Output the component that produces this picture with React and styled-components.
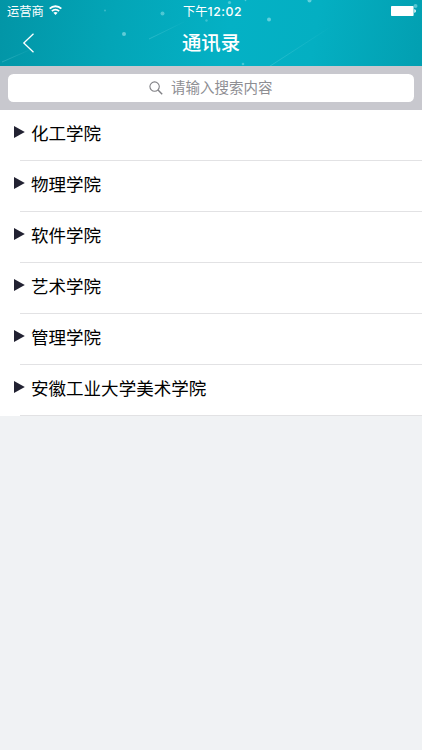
import React from "react";
import styled, { createGlobalStyle } from "styled-components";

const GlobalStyle = createGlobalStyle`
  * { box-sizing: border-box; }
  html, body { margin: 0; padding: 0; }
  body {
    background: #f0f2f4;
    font-family: "Noto Sans CJK SC", sans-serif;
  }
`;

const Screen = styled.div`
  min-height: 750px;
  background: #f0f2f4;
`;

const Header = styled.header`
  position: relative;
  height: 66px;
  overflow: hidden;
  color: #fff;
  background: linear-gradient(100deg, #0295a6 0%, #03a5b7 27%, #04b1c5 54%, #04afc2 74%, #029fb1 100%);
`;

const Sky = styled.svg`
  position: absolute;
  inset: 0;
`;

const StatusBar = styled.div`
  position: relative;
  display: grid;
  grid-template-columns: 1fr auto 1fr;
  align-items: center;
  height: 22px;
  padding: 0 6px 0 7px;
  font-size: 12.3px;
  line-height: 22px;
`;

const Carrier = styled.div`
  display: flex;
  align-items: center;
  gap: 5px;
  height: 20px;
  line-height: 20px;
  margin-bottom: 2px;
`;

const WifiGlyph = styled.svg`
  margin-bottom: 2px;
`;

const Clock = styled.div`
  padding-left: 2px;
  font-weight: 400;
  span {
    font-family: Inter, sans-serif;
    font-weight: 500;
    font-size: 12.3px;
    letter-spacing: 0.5px;
  }
`;

const Battery = styled.svg`
  justify-self: end;
  margin-bottom: 1px;
`;

const NavBar = styled.div`
  position: relative;
  display: grid;
  grid-template-columns: 1fr auto 1fr;
  align-items: center;
  height: 44px;
  padding-left: 22px;
`;

const BackButton = styled.button`
  display: flex;
  width: 14px;
  margin-bottom: 2px;
  padding: 0;
  border: 0;
  background: none;
`;

const Title = styled.h1`
  margin: 0 22px 5px 0;
  font-size: 19.4px;
  font-weight: 500;
  line-height: 30px;
`;

const SearchBar = styled.div`
  height: 44px;
  padding: 7.5px 8.5px 8px 8px;
  background: #c8c8ce;
`;

const SearchField = styled.div`
  display: flex;
  align-items: center;
  justify-content: center;
  gap: 8px;
  height: 28.5px;
  padding: 0 0 2px 0;
  border-radius: 5.5px;
  background: #fff;
  color: #8e8e93;
  font-size: 14.5px;
  font-weight: 400;
  line-height: 26px;
`;

const SearchGlyph = styled.svg`
  margin-top: 2px;
`;

const List = styled.ul`
  margin: 0;
  padding: 0;
  list-style: none;
  background: #fff;
`;

const Row = styled.li`
  display: flex;
  align-items: center;
  height: 50.95px;
  padding-left: 14px;
  background: linear-gradient(#e2e2e4, #e2e2e4) 20px 100% / 100% 1px no-repeat;
`;

const Arrow = styled.svg`
  flex: none;
  margin: 0 6px 6.2px 0;
`;

const Name = styled.span`
  padding-bottom: 4.5px;
  color: #000;
  font-size: 17.55px;
  font-weight: 400;
  line-height: 28px;
`;

const colleges = ["化工学院", "物理学院", "软件学院", "艺术学院", "管理学院", "安徽工业大学美术学院"];

const stars = [
  [124, 34, 2, 0.5],
  [105, 10.5, 1, 0.3],
  [162.5, 13.5, 2, 0.4],
  [206.5, 20.5, 1.2, 0.3],
  [229.5, 2.5, 1.6, 0.4],
  [245.5, 0.5, 0.8, 0.4],
  [269, 19.5, 2, 0.5],
  [243, 64, 1.3, 0.35],
  [309.5, 0.5, 2, 0.5],
  [415.5, 6, 2, 0.45],
];

function WifiIcon() {
  return (
    <WifiGlyph width="13" height="10" viewBox="0 0 13 10" fill="none" stroke="#fff" strokeWidth="1.9">
      <path d="M0.7 3.7C4 0.4 9 0.4 12.3 3.7" />
      <path d="M2.9 6.1C5 4.1 8 4.1 10.1 6.1" />
      <path d="M6.5 9.9L4.4 7.8C5.5 6.8 7.5 6.8 8.6 7.8Z" fill="#fff" stroke="none" />
    </WifiGlyph>
  );
}

export default function App() {
  return (
    <Screen>
      <GlobalStyle />
      <Header>
        <Sky width="422" height="66" viewBox="0 0 422 66">
          <defs>
            <linearGradient id="trail">
              <stop offset="0" stopColor="#8fe3ec" stopOpacity="0.3" />
              <stop offset="1" stopColor="#8fe3ec" stopOpacity="0" />
            </linearGradient>
          </defs>
          {stars.map(([x, y, r, o]) => (
            <circle key={`${x}-${y}`} cx={x} cy={y} r={r} fill="#bdf2f6" opacity={o} />
          ))}
          <g stroke="url(#trail)" strokeWidth="0.9">
            <path d="M2 62L34 48" />
            <path d="M149 39L186 21" />
            <path d="M264 70L332 26" />
          </g>
        </Sky>
        <StatusBar>
          <Carrier>
            运营商
            <WifiIcon />
          </Carrier>
          <Clock>
            下午<span>12:02</span>
          </Clock>
          <Battery width="25" height="10" viewBox="0 0 25 10" fill="#fff">
            <rect x="0" y="0" width="22.6" height="10" rx="0.8" />
            <path d="M23.3 3.3h0.6q1 0.4 1 1.7t-1 1.7h-0.6z" />
          </Battery>
        </StatusBar>
        <NavBar>
          <BackButton aria-label="返回">
            <svg width="14" height="20" viewBox="0 0 14 20" fill="none" stroke="#fff" strokeWidth="1.3">
              <path d="M11.5 0.8L1.8 10L11.5 19.2" />
            </svg>
          </BackButton>
          <Title>通讯录</Title>
        </NavBar>
      </Header>
      <SearchBar>
        <SearchField>
          <SearchGlyph width="14" height="14" viewBox="0 0 14 14" fill="none" stroke="#808085" strokeWidth="1.1">
            <circle cx="5.6" cy="5.6" r="4.7" />
            <path d="M9 9L13.2 13.2" strokeWidth="1.4" />
          </SearchGlyph>
          请输入搜索内容
        </SearchField>
      </SearchBar>
      <List>
        {colleges.map((name) => (
          <Row key={name}>
            <Arrow width="11" height="12" viewBox="0 0 11 12">
              <path d="M0 0L10.8 6L0 12Z" fill="#222232" />
            </Arrow>
            <Name>{name}</Name>
          </Row>
        ))}
      </List>
    </Screen>
  );
}
